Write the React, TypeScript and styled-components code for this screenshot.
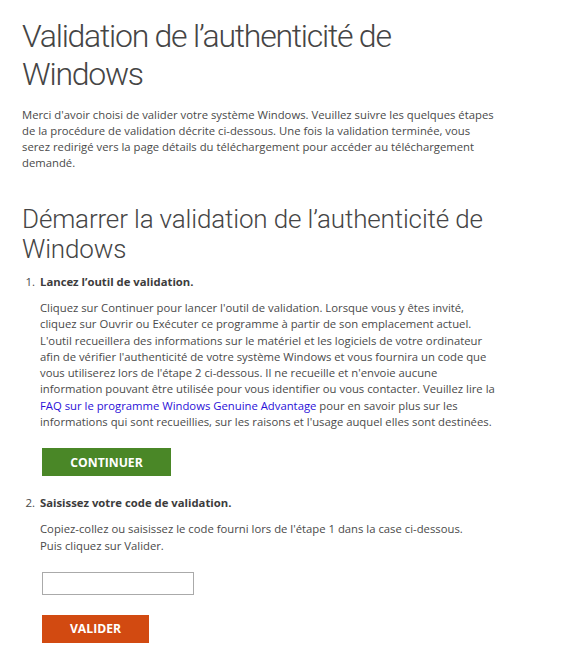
import React from 'react';
import styled, { createGlobalStyle } from 'styled-components';

const GlobalStyle = createGlobalStyle`
  body {
    margin: 0;
    background: #fff;
    font-family: "Open Sans", "Noto Sans", sans-serif;
    color: #4a4a4a;
  }
`;

const Page = styled.main`
  padding: 17px 22px 20px;
`;

const Title = styled.h1`
  margin: 0;
  font-family: Roboto, "Open Sans", sans-serif;
  font-size: 32px;
  font-weight: 300;
  line-height: 38px;
  color: #454545;
  letter-spacing: -1.25px;
`;

const Intro = styled.p`
  margin: 14px 0 0;
  font-size: 11.3px;
  line-height: 16px;
  white-space: nowrap;
`;

const SubTitle = styled.h2`
  margin: 33px 0 0;
  font-family: Roboto, "Open Sans", sans-serif;
  font-size: 26px;
  font-weight: 300;
  line-height: 30px;
  color: #454545;
  letter-spacing: -0.15px;
`;

const Steps = styled.ol`
  margin: 10px 0 0;
  padding: 0;
  list-style: none;
  counter-reset: step;
`;

const Step = styled.li`
  counter-increment: step;
  display: grid;
  grid-template-columns: 18px 1fr;

  & + & {
    margin-top: 19px;
  }

  &::before {
    content: counter(step) ".";
    font-size: 11.5px;
    line-height: 16px;
    text-align: right;
    padding-right: 5px;
  }
`;

const StepBody = styled.div`
  display: flex;
  flex-direction: column;
  align-items: flex-start;
`;

const StepTitle = styled.strong`
  font-size: 11.3px;
  line-height: 16px;
  font-weight: 700;
  color: #3c3c3c;
`;

const Text = styled.p`
  margin: 10px 0 0;
  font-size: 11.3px;
  line-height: 16.3px;
  white-space: nowrap;
`;

const Link = styled.a`
  color: #2b10d8;
  text-decoration: none;
`;

const ActionButton = styled.button<{ $color: string; $width: number }>`
  margin: ${(p) => (p.$color === 'green' ? 18 : 20)}px 0 0 2px;
  width: ${(p) => p.$width}px;
  height: 28px;
  border: 0;
  padding: 0;
  background: ${(p) => (p.$color === 'green' ? '#4a8727' : '#d24a11')};
  color: #fff;
  font-family: "Open Sans", "Noto Sans", sans-serif;
  font-size: 12.2px;
  font-weight: 700;
  text-transform: uppercase;
  cursor: pointer;
`;

const CodeInput = styled.input`
  margin: 18px 0 0 2px;
  width: 152px;
  height: 23px;
  box-sizing: border-box;
  border: 1px solid #aaaaaa;
  padding: 2px 4px;
  font-size: 12px;
  font-family: inherit;
`;

export default function App() {
  return (
    <>
      <GlobalStyle />
      <Page>
        <Title>
          Validation de l’authenticité de
          <br />
          Windows
        </Title>
        <Intro>
          Merci d'avoir choisi de valider votre système Windows. Veuillez suivre les quelques étapes
          <br />
          de la procédure de validation décrite ci-dessous. Une fois la validation terminée, vous
          <br />
          serez redirigé vers la page détails du téléchargement pour accéder au téléchargement
          <br />
          demandé.
        </Intro>
        <SubTitle>
          Démarrer la validation de l’authenticité de
          <br />
          Windows
        </SubTitle>
        <Steps>
          <Step>
            <StepBody>
              <StepTitle>Lancez l’outil de validation.</StepTitle>
              <Text>
                Cliquez sur Continuer pour lancer l'outil de validation. Lorsque vous y êtes invité,
                <br />
                cliquez sur Ouvrir ou Exécuter ce programme à partir de son emplacement actuel.
                <br />
                L'outil recueillera des informations sur le matériel et les logiciels de votre ordinateur
                <br />
                afin de vérifier l'authenticité de votre système Windows et vous fournira un code que
                <br />
                vous utiliserez lors de l'étape 2 ci-dessous. Il ne recueille et n'envoie aucune
                <br />
                information pouvant être utilisée pour vous identifier ou vous contacter. Veuillez lire la
                <br />
                <Link href="#">FAQ sur le programme Windows Genuine Advantage</Link> pour en savoir plus sur les
                <br />
                informations qui sont recueillies, sur les raisons et l'usage auquel elles sont destinées.
              </Text>
              <ActionButton $color="green" $width={129}>Continuer</ActionButton>
            </StepBody>
          </Step>
          <Step>
            <StepBody>
              <StepTitle>Saisissez votre code de validation.</StepTitle>
              <Text>
                Copiez-collez ou saisissez le code fourni lors de l'étape 1 dans la case ci-dessous.
                <br />
                Puis cliquez sur Valider.
              </Text>
              <CodeInput type="text" />
              <ActionButton $color="orange" $width={107}>Valider</ActionButton>
            </StepBody>
          </Step>
        </Steps>
      </Page>
    </>
  );
}
